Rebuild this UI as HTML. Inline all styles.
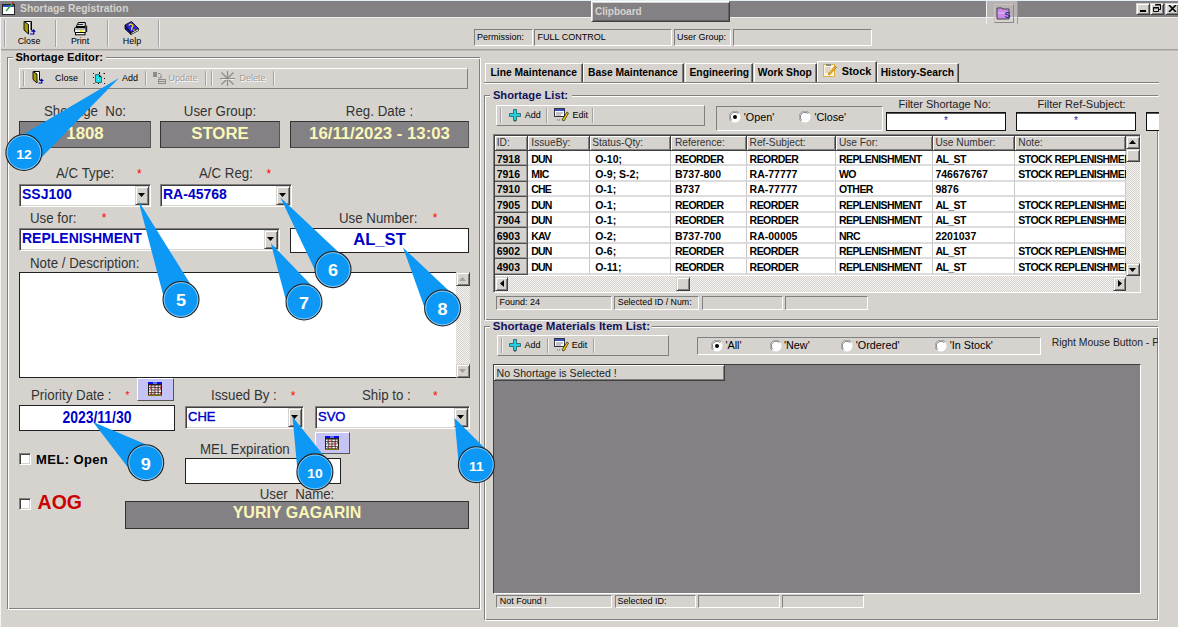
<!DOCTYPE html><html><head><meta charset="utf-8"><style>
html,body{margin:0;padding:0;}
body{width:1178px;height:627px;overflow:hidden;position:relative;background:#D6D3CE;font-family:"Liberation Sans",sans-serif;}
div,svg{position:absolute;box-sizing:border-box;}
</style></head><body>
<div style="left:0px;top:0px;width:1178px;height:1px;background:#E6EEF6;"></div>
<div style="left:0px;top:1px;width:1178px;height:16px;background:#848184;"></div>
<div style="left:0px;top:17px;width:1178px;height:1px;background:#EFEEEC;"></div>
<div style="left:0px;top:17px;width:1px;height:610px;background:#F4F4F4;"></div>
<svg style="left:2px;top:2px" width="14" height="13"><rect x="0.5" y="2.5" width="12" height="10" fill="#fff" stroke="#222"/><rect x="1" y="3" width="11" height="2" fill="#2A4EC8"/><path d="M4 9L11 1" stroke="#3a3" stroke-width="1.5"/><rect x="10" y="0" width="2" height="2" fill="#d22"/></svg>
<div style="left:20px;top:4.20px;white-space:nowrap;font-size:10.4px;line-height:10.4px;font-weight:bold;color:#D6D3CE;text-align:left;white-space:nowrap;">Shortage Registration</div>
<div style="left:591px;top:1px;width:139px;height:21px;background:#848184;border-top:1px solid #fff;border-left:1px solid #fff;border-bottom:1px solid #404040;border-right:1px solid #404040;box-shadow:inset 1px 1px 0 #D6D3CE, inset -1px -1px 0 #606060;"></div>
<div style="left:595px;top:6.54px;white-space:nowrap;font-size:10px;line-height:10px;font-weight:bold;color:#D6D3CE;text-align:left;white-space:nowrap;">Clipboard</div>
<div style="left:986px;top:1px;width:32px;height:16px;background:#B9B2B2;"></div>
<div style="left:986px;top:1px;width:1px;height:23px;background:#F2F2F2;"></div>
<div style="left:1017px;top:1px;width:1px;height:23px;background:#9A9898;"></div>
<div style="left:994px;top:4px;width:20px;height:19px;border-top:1px solid #c8c4c4;border-left:1px solid #c8c4c4;border-bottom:1px solid #8a8888;border-right:1px solid #8a8888;"></div>
<svg style="left:996px;top:6px" width="15" height="14"><path d="M1 2h5l1 1h6v10H1z" fill="#C88AE8" stroke="#444"/><path d="M2 7h11" stroke="#e6c6f4"/><text x="8.5" y="11.5" font-family="Liberation Sans" font-weight="bold" font-size="9" fill="#2a2a90">S</text></svg>
<div style="left:1136px;top:3px;width:14px;height:12px;background:#D6D3CE;border-top:1px solid #D6D3CE;border-left:1px solid #D6D3CE;border-bottom:1px solid #404040;border-right:1px solid #404040;box-sizing:border-box;box-shadow:inset 1px 1px 0 #fff, inset -1px -1px 0 #808080;"></div>
<div style="left:1150px;top:3px;width:14px;height:12px;background:#D6D3CE;border-top:1px solid #D6D3CE;border-left:1px solid #D6D3CE;border-bottom:1px solid #404040;border-right:1px solid #404040;box-sizing:border-box;box-shadow:inset 1px 1px 0 #fff, inset -1px -1px 0 #808080;"></div>
<div style="left:1165px;top:3px;width:14px;height:12px;background:#D6D3CE;border-top:1px solid #D6D3CE;border-left:1px solid #D6D3CE;border-bottom:1px solid #404040;border-right:1px solid #404040;box-sizing:border-box;box-shadow:inset 1px 1px 0 #fff, inset -1px -1px 0 #808080;"></div>
<svg style="left:1140px;top:10px" width="6" height="2"><rect width="6" height="2" fill="#000"/></svg>
<svg style="left:1153px;top:4px" width="8" height="8"><path d="M2.5 0.5h5v5h-2M0.5 3.5h5v4h-5z" fill="none" stroke="#000"/><path d="M2 1h6M0 4h6" stroke="#000"/></svg>
<svg style="left:1168px;top:5px" width="9" height="7"><path d="M1 0L8 7M8 0L1 7" stroke="#000" stroke-width="1.6"/></svg>
<div style="left:4px;top:20px;width:1px;height:27px;background:#A4A2A6;"></div>
<div style="left:5px;top:20px;width:1px;height:27px;background:#F0EFED;"></div>
<div style="left:55px;top:20px;width:1px;height:27px;background:#A4A2A6;"></div>
<div style="left:56px;top:20px;width:1px;height:27px;background:#F0EFED;"></div>
<div style="left:107px;top:20px;width:1px;height:27px;background:#A4A2A6;"></div>
<div style="left:108px;top:20px;width:1px;height:27px;background:#F0EFED;"></div>
<div style="left:158px;top:20px;width:1px;height:27px;background:#A4A2A6;"></div>
<div style="left:159px;top:20px;width:1px;height:27px;background:#F0EFED;"></div>
<div style="left:1px;top:49px;width:1177px;height:1px;background:#A2A0A0;"></div>
<div style="left:1px;top:50px;width:1177px;height:1px;background:#BEBCB9;"></div>
<svg style="left:18px;top:18px" width="20" height="20"><path d="M6.5 3.5h7v9" fill="none" stroke="#000"/><rect x="8" y="4" width="4.5" height="8" fill="#fff"/><path d="M12.5 4v8" stroke="#808080"/><path d="M6 3.5L10.5 6.5V16L6 12z" fill="#A39B00" stroke="#000" stroke-width="0.9"/><path d="M15.5 11L18 13.7H16.4V16.6H12V15.6H15.2V13.7H13z" fill="#0000A8"/></svg>
<svg style="left:70px;top:18px" width="20" height="20"><path d="M8.3 4.5h7v4h-9z" fill="#D8D8D8" stroke="#000"/><path d="M8 6.5h5" stroke="#000" stroke-width="0.8"/><rect x="4.5" y="9.5" width="11.5" height="5" rx="1" fill="#EEE" stroke="#000"/><path d="M5 11h10.5" stroke="#555" stroke-width="0.8"/><rect x="10" y="12" width="2.5" height="2" fill="#F0F000"/><rect x="5.5" y="14.5" width="9.5" height="2.3" fill="#fff" stroke="#000"/><path d="M16.5 7.5v6.5" stroke="#222" stroke-width="1.4"/></svg>
<svg style="left:120px;top:18px" width="20" height="20"><path d="M5 7L11.5 3.5L18.5 10.5L11 15z" fill="#2A2AE0" stroke="#000" stroke-width="0.8"/><path d="M5 7V11L11 16.5V15z" fill="#1818A0" stroke="#000" stroke-width="0.8"/><path d="M11 15L18.5 10.5V12.5L11 16.5z" fill="#fff" stroke="#000" stroke-width="0.7"/><path d="M9 7.5q1-2 3-1t0 3q-1 1 0 2.5" fill="none" stroke="#FFE000" stroke-width="1.3"/><circle cx="14" cy="12" r="0.8" fill="#FFE000"/></svg>
<div style="left:6px;top:37.07px;white-space:nowrap;font-size:8.9px;line-height:8.9px;font-weight:normal;color:#000;text-align:left;white-space:nowrap;width:46px;text-align:center;">Close</div>
<div style="left:57px;top:37.07px;white-space:nowrap;font-size:8.9px;line-height:8.9px;font-weight:normal;color:#000;text-align:left;white-space:nowrap;width:46px;text-align:center;">Print</div>
<div style="left:109px;top:37.07px;white-space:nowrap;font-size:8.9px;line-height:8.9px;font-weight:normal;color:#000;text-align:left;white-space:nowrap;width:46px;text-align:center;">Help</div>
<div style="left:474px;top:29px;width:59px;height:17px;background:#D6D3CE;border-top:1px solid #808080;border-left:1px solid #808080;border-bottom:1px solid #fff;border-right:1px solid #fff;box-sizing:border-box;"></div>
<div style="left:477px;top:33.38px;white-space:nowrap;font-size:9px;line-height:9px;font-weight:normal;color:#000;text-align:left;white-space:nowrap;">Permission:</div>
<div style="left:534px;top:29px;width:138px;height:17px;background:#D6D3CE;border-top:1px solid #808080;border-left:1px solid #808080;border-bottom:1px solid #fff;border-right:1px solid #fff;box-sizing:border-box;"></div>
<div style="left:537.5px;top:33.38px;white-space:nowrap;font-size:9px;line-height:9px;font-weight:normal;color:#000;text-align:left;white-space:nowrap;">FULL CONTROL</div>
<div style="left:674px;top:29px;width:57px;height:17px;background:#D6D3CE;border-top:1px solid #808080;border-left:1px solid #808080;border-bottom:1px solid #fff;border-right:1px solid #fff;box-sizing:border-box;"></div>
<div style="left:677px;top:33.38px;white-space:nowrap;font-size:9px;line-height:9px;font-weight:normal;color:#000;text-align:left;white-space:nowrap;">User Group:</div>
<div style="left:733px;top:29px;width:139px;height:17px;background:#D6D3CE;border-top:1px solid #808080;border-left:1px solid #808080;border-bottom:1px solid #fff;border-right:1px solid #fff;box-sizing:border-box;"></div>
<div style="left:7px;top:57px;width:473px;height:552px;border:1px solid #808080;box-sizing:border-box;"></div>
<div style="left:8px;top:58px;width:473px;height:552px;border:1px solid #fff;box-sizing:border-box;"></div>
<div style="left:13px;top:52px;width:93px;height:12px;background:#D6D3CE;"></div>
<div style="left:15.4px;top:52.22px;white-space:nowrap;font-size:11.2px;line-height:11.2px;font-weight:bold;color:#000;text-align:left;white-space:nowrap;">Shortage Editor:</div>
<div style="left:19px;top:68px;width:449px;height:21px;background:#D6D3CE;border-top:1px solid #fff;border-left:1px solid #fff;border-bottom:1px solid #808080;border-right:1px solid #808080;box-sizing:border-box;"></div>
<div style="left:23px;top:71px;width:1px;height:15px;background:#A4A2A6;"></div>
<div style="left:24px;top:71px;width:1px;height:15px;background:#F0EFED;"></div>
<div style="left:84px;top:71px;width:1px;height:15px;background:#A4A2A6;"></div>
<div style="left:85px;top:71px;width:1px;height:15px;background:#F0EFED;"></div>
<div style="left:145px;top:71px;width:1px;height:15px;background:#A4A2A6;"></div>
<div style="left:146px;top:71px;width:1px;height:15px;background:#F0EFED;"></div>
<div style="left:205px;top:71px;width:1px;height:15px;background:#A4A2A6;"></div>
<div style="left:206px;top:71px;width:1px;height:15px;background:#F0EFED;"></div>
<div style="left:211px;top:71px;width:1px;height:15px;background:#A4A2A6;"></div>
<div style="left:212px;top:71px;width:1px;height:15px;background:#F0EFED;"></div>
<div style="left:273px;top:71px;width:1px;height:15px;background:#A4A2A6;"></div>
<div style="left:274px;top:71px;width:1px;height:15px;background:#F0EFED;"></div>
<svg style="left:27px;top:68px" width="20" height="20"><path d="M6.5 3.5h6v8.5" fill="none" stroke="#000"/><rect x="8" y="4" width="4" height="7.5" fill="#fff"/><path d="M6 3.5L10 6V15L6 11.5z" fill="#A39B00" stroke="#000" stroke-width="0.9"/><path d="M14.5 10.5L17 13H15.4V15.6H11.5V14.6H14.2V13H12z" fill="#0000A8"/></svg>
<div style="left:55px;top:74.08px;white-space:nowrap;font-size:9px;line-height:9px;font-weight:normal;color:#000;text-align:left;white-space:nowrap;">Close</div>
<svg style="left:88px;top:68px" width="20" height="20"><path d="M7.5 6.5h3.5l2.5 2.5v5.5h-6z" fill="#10E0E8" stroke="#444" stroke-width="0.8"/><path d="M11 6.5v2.5h2.5z" fill="#000"/><path d="M9 9l1 1M10 11l1 1" stroke="#bff" stroke-width="0.8"/><g fill="#111"><rect x="5" y="5" width="1" height="1"/><rect x="11" y="4" width="1" height="2"/><rect x="15.5" y="5" width="1.5" height="1"/><rect x="5" y="9" width="1" height="1"/><rect x="16" y="10" width="1" height="1"/><rect x="5.5" y="15" width="1" height="1"/><rect x="10" y="15" width="1" height="1"/><rect x="16" y="15" width="1" height="1"/></g></svg>
<div style="left:122px;top:74.08px;white-space:nowrap;font-size:9px;line-height:9px;font-weight:normal;color:#000;text-align:left;white-space:nowrap;">Add</div>
<svg style="left:0;top:0" width="240" height="90"><g fill="none" stroke="#8C8C8C"><rect x="153.5" y="72.5" width="3" height="4" fill="#8C8C8C"/><path d="M158 73.5h2l1 1v4"/><path d="M161 77l-1.5 1.5L158 77"/><rect x="158.5" y="79.5" width="7" height="4"/><path d="M159 81.5h6"/></g></svg>
<div style="left:168.5px;top:74.08px;white-space:nowrap;font-size:9px;line-height:9px;font-weight:normal;color:#A09C98;text-align:left;white-space:nowrap;text-shadow:1px 1px 0 #fff;">Update</div>
<svg style="left:0;top:0" width="240" height="90"><g stroke="#8C8C8C" stroke-width="1.2"><path d="M227.5 71v15M220 78.5h15M221.5 72.5l12 12M233.5 72.5l-12 12"/></g><path d="M222 79.5h12" stroke="#fff" stroke-width="0.6"/></svg>
<div style="left:239.5px;top:74.08px;white-space:nowrap;font-size:9px;line-height:9px;font-weight:normal;color:#A09C98;text-align:left;white-space:nowrap;text-shadow:1px 1px 0 #fff;">Delete</div>
<div style="left:19px;top:103.85px;white-space:nowrap;font-size:14px;line-height:14px;font-weight:normal;color:#333;text-align:left;white-space:nowrap;transform:scaleX(0.95);width:132px;text-align:center;">Shortage&nbsp; No:</div>
<div style="left:160px;top:103.85px;white-space:nowrap;font-size:14px;line-height:14px;font-weight:normal;color:#333;text-align:left;white-space:nowrap;transform:scaleX(0.95);width:120px;text-align:center;">User Group:</div>
<div style="left:290px;top:103.85px;white-space:nowrap;font-size:14px;line-height:14px;font-weight:normal;color:#333;text-align:left;white-space:nowrap;transform:scaleX(0.95);width:179px;text-align:center;">Reg. Date :</div>
<div style="left:19px;top:121px;width:132px;height:27px;background:#848184;border:1px solid #333;border-right-color:#555;border-bottom-color:#444;"></div>
<div style="left:19px;top:125.78px;white-space:nowrap;font-size:16.8px;line-height:16.8px;font-weight:bold;color:#FBF7B8;text-align:left;white-space:nowrap;width:132px;text-align:center;">1808</div>
<div style="left:160px;top:121px;width:120px;height:27px;background:#848184;border:1px solid #333;border-right-color:#555;border-bottom-color:#444;"></div>
<div style="left:160px;top:125.78px;white-space:nowrap;font-size:16.8px;line-height:16.8px;font-weight:bold;color:#FBF7B8;text-align:left;white-space:nowrap;width:120px;text-align:center;">STORE</div>
<div style="left:290px;top:121px;width:179px;height:27px;background:#848184;border:1px solid #333;border-right-color:#555;border-bottom-color:#444;"></div>
<div style="left:290px;top:125.78px;white-space:nowrap;font-size:16.8px;line-height:16.8px;font-weight:bold;color:#FBF7B8;text-align:left;white-space:nowrap;width:179px;text-align:center;">16/11/2023 - 13:03</div>
<div style="left:55.5px;top:166.45px;white-space:nowrap;font-size:14px;line-height:14px;font-weight:normal;color:#333;text-align:left;white-space:nowrap;transform:scaleX(0.95);transform-origin:0 0;">A/C Type:</div>
<div style="left:137px;top:168.14px;white-space:nowrap;font-size:12px;line-height:12px;font-weight:normal;color:#f00;text-align:left;white-space:nowrap;">*</div>
<div style="left:199px;top:166.45px;white-space:nowrap;font-size:14px;line-height:14px;font-weight:normal;color:#333;text-align:left;white-space:nowrap;transform:scaleX(0.95);transform-origin:0 0;">A/C Reg:</div>
<div style="left:266.5px;top:168.14px;white-space:nowrap;font-size:12px;line-height:12px;font-weight:normal;color:#f00;text-align:left;white-space:nowrap;">*</div>
<div style="left:19px;top:184px;width:132px;height:23px;background:#fff;border-top:1px solid #808080;border-left:1px solid #808080;border-bottom:1px solid #fff;border-right:1px solid #fff;box-sizing:border-box;box-shadow:inset 1px 1px 0 #404040, inset -1px -1px 0 #D6D3CE;"></div>
<div style="left:135px;top:186px;width:14px;height:19px;background:#D6D3CE;border-top:1px solid #D6D3CE;border-left:1px solid #D6D3CE;border-bottom:1px solid #404040;border-right:1px solid #404040;box-sizing:border-box;box-shadow:inset 1px 1px 0 #fff, inset -1px -1px 0 #808080;"></div>
<svg style="left:138px;top:193px" width="7" height="4"><path d="M0 0h7L3.5 4z" fill="#000"/></svg>
<div style="left:22px;top:187.19px;white-space:nowrap;font-size:14px;line-height:14px;font-weight:bold;color:#0000C8;text-align:left;white-space:nowrap;">SSJ100</div>
<div style="left:160px;top:184px;width:132px;height:23px;background:#fff;border-top:1px solid #808080;border-left:1px solid #808080;border-bottom:1px solid #fff;border-right:1px solid #fff;box-sizing:border-box;box-shadow:inset 1px 1px 0 #404040, inset -1px -1px 0 #D6D3CE;"></div>
<div style="left:276px;top:186px;width:14px;height:19px;background:#D6D3CE;border-top:1px solid #D6D3CE;border-left:1px solid #D6D3CE;border-bottom:1px solid #404040;border-right:1px solid #404040;box-sizing:border-box;box-shadow:inset 1px 1px 0 #fff, inset -1px -1px 0 #808080;"></div>
<svg style="left:279px;top:193px" width="7" height="4"><path d="M0 0h7L3.5 4z" fill="#000"/></svg>
<div style="left:163px;top:187.19px;white-space:nowrap;font-size:14px;line-height:14px;font-weight:bold;color:#0000C8;text-align:left;white-space:nowrap;">RA-45768</div>
<div style="left:30.4px;top:210.65px;white-space:nowrap;font-size:14px;line-height:14px;font-weight:normal;color:#333;text-align:left;white-space:nowrap;transform:scaleX(0.95);transform-origin:0 0;">Use for:</div>
<div style="left:101.7px;top:212.34px;white-space:nowrap;font-size:12px;line-height:12px;font-weight:normal;color:#f00;text-align:left;white-space:nowrap;">*</div>
<div style="left:339.4px;top:210.65px;white-space:nowrap;font-size:14px;line-height:14px;font-weight:normal;color:#333;text-align:left;white-space:nowrap;transform:scaleX(0.95);transform-origin:0 0;">Use Number:</div>
<div style="left:432.8px;top:212.34px;white-space:nowrap;font-size:12px;line-height:12px;font-weight:normal;color:#f00;text-align:left;white-space:nowrap;">*</div>
<div style="left:19px;top:228px;width:261px;height:23px;background:#fff;border-top:1px solid #808080;border-left:1px solid #808080;border-bottom:1px solid #fff;border-right:1px solid #fff;box-sizing:border-box;box-shadow:inset 1px 1px 0 #404040, inset -1px -1px 0 #D6D3CE;"></div>
<div style="left:264px;top:230px;width:14px;height:19px;background:#D6D3CE;border-top:1px solid #D6D3CE;border-left:1px solid #D6D3CE;border-bottom:1px solid #404040;border-right:1px solid #404040;box-sizing:border-box;box-shadow:inset 1px 1px 0 #fff, inset -1px -1px 0 #808080;"></div>
<svg style="left:267px;top:237px" width="7" height="4"><path d="M0 0h7L3.5 4z" fill="#000"/></svg>
<div style="left:22px;top:231.19px;white-space:nowrap;font-size:14px;line-height:14px;font-weight:bold;color:#0000C8;text-align:left;white-space:nowrap;">REPLENISHMENT</div>
<div style="left:290px;top:228px;width:179px;height:25px;background:#fff;border:1px solid #222;"></div>
<div style="left:290px;top:231.95px;white-space:nowrap;font-size:16.6px;line-height:16.6px;font-weight:bold;color:#0000C8;text-align:left;white-space:nowrap;width:179px;text-align:center;">AL_ST</div>
<div style="left:30.4px;top:255.65px;white-space:nowrap;font-size:14px;line-height:14px;font-weight:normal;color:#333;text-align:left;white-space:nowrap;transform:scaleX(0.95);transform-origin:0 0;">Note / Description:</div>
<div style="left:19px;top:272px;width:438px;height:106px;background:#fff;border:1px solid #222;"></div>
<div style="left:456px;top:272px;width:14px;height:106px;background:conic-gradient(#F4F3F1 25%,#D6D3CE 0 50%,#F4F3F1 0 75%,#D6D3CE 0) 0 0/2px 2px;"></div>
<div style="left:456px;top:272px;width:14px;height:14px;background:#D6D3CE;border-top:1px solid #D6D3CE;border-left:1px solid #D6D3CE;border-bottom:1px solid #404040;border-right:1px solid #404040;box-sizing:border-box;box-shadow:inset 1px 1px 0 #fff, inset -1px -1px 0 #808080;"></div>
<div style="left:456px;top:364px;width:14px;height:14px;background:#D6D3CE;border-top:1px solid #D6D3CE;border-left:1px solid #D6D3CE;border-bottom:1px solid #404040;border-right:1px solid #404040;box-sizing:border-box;box-shadow:inset 1px 1px 0 #fff, inset -1px -1px 0 #808080;"></div>
<svg style="left:459px;top:277px" width="7" height="4"><path d="M0 4h7L3.5 0z" fill="#A0A0A0"/></svg>
<svg style="left:459px;top:369px" width="7" height="4"><path d="M0 0h7L3.5 4z" fill="#A0A0A0"/></svg>
<div style="left:31.4px;top:387.95px;white-space:nowrap;font-size:14px;line-height:14px;font-weight:normal;color:#333;text-align:left;white-space:nowrap;transform:scaleX(0.95);transform-origin:0 0;">Priority Date :</div>
<div style="left:125.4px;top:391.34px;white-space:nowrap;font-size:10px;line-height:10px;font-weight:normal;color:#f00;text-align:left;white-space:nowrap;">*</div>
<div style="left:137px;top:378px;width:37px;height:23px;background:#C6C4F4;border-top:1px solid #fff;border-left:1px solid #fff;border-bottom:1px solid #555;border-right:1px solid #555;"></div>
<svg style="left:148.0px;top:381.5px" width="14" height="14"><rect x="0" y="0" width="14" height="14" fill="#222"/><rect x="0" y="0" width="14" height="2" fill="#0010F0"/><rect x="5" y="0.5" width="4" height="1" fill="#ccd"/><rect x="1.0" y="3.5" width="2.4" height="1.7" fill="#fff"/><rect x="1.0" y="5.9" width="2.4" height="1.7" fill="#fff"/><rect x="1.0" y="8.3" width="2.4" height="1.7" fill="#fff"/><rect x="1.0" y="10.7" width="2.4" height="1.7" fill="#fff"/><rect x="4.2" y="3.5" width="2.4" height="1.7" fill="#fff"/><rect x="4.2" y="5.9" width="2.4" height="1.7" fill="#fff"/><rect x="4.2" y="8.3" width="2.4" height="1.7" fill="#fff"/><rect x="4.2" y="10.7" width="2.4" height="1.7" fill="#fff"/><rect x="7.4" y="3.5" width="2.4" height="1.7" fill="#fff"/><rect x="7.4" y="5.9" width="2.4" height="1.7" fill="#fff"/><rect x="7.4" y="8.3" width="2.4" height="1.7" fill="#fff"/><rect x="7.4" y="10.7" width="2.4" height="1.7" fill="#fff"/><rect x="10.6" y="3.5" width="2.4" height="1.7" fill="#fff"/><rect x="10.6" y="5.9" width="2.4" height="1.7" fill="#fff"/><rect x="10.6" y="8.3" width="2.4" height="1.7" fill="#fff"/><rect x="10.6" y="10.7" width="2.4" height="1.7" fill="#fff"/><rect x="2.2" y="3.5" width="1.2" height="1.2" fill="#F02020"/><rect x="2.2" y="5.9" width="1.2" height="1.2" fill="#F02020"/><rect x="2.2" y="10.7" width="1.2" height="1.2" fill="#F02020"/><rect x="5.4" y="3.5" width="1.2" height="1.2" fill="#F02020"/><rect x="5.4" y="8.3" width="1.2" height="1.2" fill="#F02020"/><rect x="5.4" y="10.7" width="1.2" height="1.2" fill="#F02020"/><rect x="8.6" y="5.9" width="1.2" height="1.2" fill="#F02020"/><rect x="8.6" y="8.3" width="1.2" height="1.2" fill="#F02020"/><rect x="11.8" y="3.5" width="1.2" height="1.2" fill="#F02020"/><rect x="11.8" y="5.9" width="1.2" height="1.2" fill="#F02020"/><rect x="11.8" y="10.7" width="1.2" height="1.2" fill="#F02020"/><rect x="0" y="12.8" width="14" height="1.2" fill="#807000"/></svg>
<div style="left:211.3px;top:387.95px;white-space:nowrap;font-size:14px;line-height:14px;font-weight:normal;color:#333;text-align:left;white-space:nowrap;transform:scaleX(0.95);transform-origin:0 0;">Issued By :</div>
<div style="left:290.8px;top:389.64px;white-space:nowrap;font-size:12px;line-height:12px;font-weight:normal;color:#f00;text-align:left;white-space:nowrap;">*</div>
<div style="left:362px;top:387.95px;white-space:nowrap;font-size:14px;line-height:14px;font-weight:normal;color:#333;text-align:left;white-space:nowrap;transform:scaleX(0.95);transform-origin:0 0;">Ship to :</div>
<div style="left:433px;top:389.64px;white-space:nowrap;font-size:12px;line-height:12px;font-weight:normal;color:#f00;text-align:left;white-space:nowrap;">*</div>
<div style="left:19px;top:405px;width:156px;height:26px;background:#fff;border:1px solid #222;"></div>
<div style="left:19px;top:409.96px;white-space:nowrap;font-size:16px;line-height:16px;font-weight:bold;color:#0000C8;text-align:left;white-space:nowrap;width:156px;text-align:center;transform:scaleX(0.87);">2023/11/30</div>
<div style="left:185px;top:406px;width:119px;height:23px;background:#fff;border-top:1px solid #808080;border-left:1px solid #808080;border-bottom:1px solid #fff;border-right:1px solid #fff;box-sizing:border-box;box-shadow:inset 1px 1px 0 #404040, inset -1px -1px 0 #D6D3CE;"></div>
<div style="left:288px;top:408px;width:14px;height:19px;background:#D6D3CE;border-top:1px solid #D6D3CE;border-left:1px solid #D6D3CE;border-bottom:1px solid #404040;border-right:1px solid #404040;box-sizing:border-box;box-shadow:inset 1px 1px 0 #fff, inset -1px -1px 0 #808080;"></div>
<svg style="left:291px;top:415px" width="7" height="4"><path d="M0 0h7L3.5 4z" fill="#000"/></svg>
<div style="left:188px;top:409.68px;white-space:nowrap;font-size:13px;line-height:13px;font-weight:normal;color:#0000C8;text-align:left;white-space:nowrap;-webkit-text-stroke:0.4px #0000C8;">CHE</div>
<style>.med{-webkit-text-stroke:0.35px #0000C8;}</style>
<div style="left:315px;top:406px;width:155px;height:23px;background:#fff;border-top:1px solid #808080;border-left:1px solid #808080;border-bottom:1px solid #fff;border-right:1px solid #fff;box-sizing:border-box;box-shadow:inset 1px 1px 0 #404040, inset -1px -1px 0 #D6D3CE;"></div>
<div style="left:454px;top:408px;width:14px;height:19px;background:#D6D3CE;border-top:1px solid #D6D3CE;border-left:1px solid #D6D3CE;border-bottom:1px solid #404040;border-right:1px solid #404040;box-sizing:border-box;box-shadow:inset 1px 1px 0 #fff, inset -1px -1px 0 #808080;"></div>
<svg style="left:457px;top:415px" width="7" height="4"><path d="M0 0h7L3.5 4z" fill="#000"/></svg>
<div style="left:318px;top:409.68px;white-space:nowrap;font-size:13px;line-height:13px;font-weight:normal;color:#0000C8;text-align:left;white-space:nowrap;-webkit-text-stroke:0.4px #0000C8;">SVO</div>
<div style="left:315px;top:432px;width:35px;height:22px;background:#C6C4F4;border-top:1px solid #fff;border-left:1px solid #fff;border-bottom:1px solid #555;border-right:1px solid #555;"></div>
<svg style="left:325.0px;top:435.5px" width="14" height="14"><rect x="0" y="0" width="14" height="14" fill="#222"/><rect x="0" y="0" width="14" height="2" fill="#0010F0"/><rect x="5" y="0.5" width="4" height="1" fill="#ccd"/><rect x="1.0" y="3.5" width="2.4" height="1.7" fill="#fff"/><rect x="1.0" y="5.9" width="2.4" height="1.7" fill="#fff"/><rect x="1.0" y="8.3" width="2.4" height="1.7" fill="#fff"/><rect x="1.0" y="10.7" width="2.4" height="1.7" fill="#fff"/><rect x="4.2" y="3.5" width="2.4" height="1.7" fill="#fff"/><rect x="4.2" y="5.9" width="2.4" height="1.7" fill="#fff"/><rect x="4.2" y="8.3" width="2.4" height="1.7" fill="#fff"/><rect x="4.2" y="10.7" width="2.4" height="1.7" fill="#fff"/><rect x="7.4" y="3.5" width="2.4" height="1.7" fill="#fff"/><rect x="7.4" y="5.9" width="2.4" height="1.7" fill="#fff"/><rect x="7.4" y="8.3" width="2.4" height="1.7" fill="#fff"/><rect x="7.4" y="10.7" width="2.4" height="1.7" fill="#fff"/><rect x="10.6" y="3.5" width="2.4" height="1.7" fill="#fff"/><rect x="10.6" y="5.9" width="2.4" height="1.7" fill="#fff"/><rect x="10.6" y="8.3" width="2.4" height="1.7" fill="#fff"/><rect x="10.6" y="10.7" width="2.4" height="1.7" fill="#fff"/><rect x="2.2" y="3.5" width="1.2" height="1.2" fill="#F02020"/><rect x="2.2" y="5.9" width="1.2" height="1.2" fill="#F02020"/><rect x="2.2" y="10.7" width="1.2" height="1.2" fill="#F02020"/><rect x="5.4" y="3.5" width="1.2" height="1.2" fill="#F02020"/><rect x="5.4" y="8.3" width="1.2" height="1.2" fill="#F02020"/><rect x="5.4" y="10.7" width="1.2" height="1.2" fill="#F02020"/><rect x="8.6" y="5.9" width="1.2" height="1.2" fill="#F02020"/><rect x="8.6" y="8.3" width="1.2" height="1.2" fill="#F02020"/><rect x="11.8" y="3.5" width="1.2" height="1.2" fill="#F02020"/><rect x="11.8" y="5.9" width="1.2" height="1.2" fill="#F02020"/><rect x="11.8" y="10.7" width="1.2" height="1.2" fill="#F02020"/><rect x="0" y="12.8" width="14" height="1.2" fill="#807000"/></svg>
<div style="left:199.8px;top:441.65px;white-space:nowrap;font-size:14px;line-height:14px;font-weight:normal;color:#333;text-align:left;white-space:nowrap;transform:scaleX(0.95);transform-origin:0 0;">MEL Expiration</div>
<div style="left:185px;top:458px;width:156px;height:26px;background:#fff;border:1px solid #222;"></div>
<div style="left:19px;top:453px;width:12px;height:12px;background:#fff;border-top:1px solid #808080;border-left:1px solid #808080;border-bottom:1px solid #fff;border-right:1px solid #fff;box-shadow:inset 1px 1px 0 #404040, inset -1px -1px 0 #D6D3CE;"></div>
<div style="left:36px;top:452.50px;white-space:nowrap;font-size:13px;line-height:13px;font-weight:bold;color:#000;text-align:left;white-space:nowrap;letter-spacing:0.4px;">MEL: Open</div>
<div style="left:19px;top:498px;width:12px;height:12px;background:#fff;border-top:1px solid #808080;border-left:1px solid #808080;border-bottom:1px solid #fff;border-right:1px solid #fff;box-shadow:inset 1px 1px 0 #404040, inset -1px -1px 0 #D6D3CE;"></div>
<div style="left:37.6px;top:493.09px;white-space:nowrap;font-size:19.5px;line-height:19.5px;font-weight:bold;color:#CC0000;text-align:left;white-space:nowrap;">AOG</div>
<div style="left:125px;top:486.55px;white-space:nowrap;font-size:14px;line-height:14px;font-weight:normal;color:#333;text-align:left;white-space:nowrap;transform:scaleX(0.95);width:344px;text-align:center;">User&nbsp; Name:</div>
<div style="left:125px;top:501px;width:344px;height:28px;background:#848184;border:1px solid #333;"></div>
<div style="left:125px;top:505.46px;white-space:nowrap;font-size:16px;line-height:16px;font-weight:bold;color:#FBF7B8;text-align:left;white-space:nowrap;width:344px;text-align:center;">YURIY GAGARIN</div>
<div style="left:485px;top:63px;width:98px;height:20px;border-top:1px solid #fff;border-left:1px solid #fff;border-right:1px solid #404040;box-shadow:inset -1px 0 0 #808080;"></div>
<div style="left:490.5px;top:68.28px;white-space:nowrap;font-size:10.3px;line-height:10.3px;font-weight:bold;color:#000;text-align:left;white-space:nowrap;">Line Maintenance</div>
<div style="left:583px;top:63px;width:101px;height:20px;border-top:1px solid #fff;border-left:1px solid #fff;border-right:1px solid #404040;box-shadow:inset -1px 0 0 #808080;"></div>
<div style="left:588px;top:68.28px;white-space:nowrap;font-size:10.3px;line-height:10.3px;font-weight:bold;color:#000;text-align:left;white-space:nowrap;">Base Maintenance</div>
<div style="left:685px;top:63px;width:68px;height:20px;border-top:1px solid #fff;border-left:1px solid #fff;border-right:1px solid #404040;box-shadow:inset -1px 0 0 #808080;"></div>
<div style="left:689.5px;top:68.28px;white-space:nowrap;font-size:10.3px;line-height:10.3px;font-weight:bold;color:#000;text-align:left;white-space:nowrap;">Engineering</div>
<div style="left:754px;top:63px;width:63px;height:20px;border-top:1px solid #fff;border-left:1px solid #fff;border-right:1px solid #404040;box-shadow:inset -1px 0 0 #808080;"></div>
<div style="left:757.7px;top:68.28px;white-space:nowrap;font-size:10.3px;line-height:10.3px;font-weight:bold;color:#000;text-align:left;white-space:nowrap;">Work Shop</div>
<div style="left:877px;top:63px;width:82px;height:20px;border-top:1px solid #fff;border-left:1px solid #fff;border-right:1px solid #404040;box-shadow:inset -1px 0 0 #808080;"></div>
<div style="left:880.7px;top:68.28px;white-space:nowrap;font-size:10.3px;line-height:10.3px;font-weight:bold;color:#000;text-align:left;white-space:nowrap;">History-Search</div>
<div style="left:817px;top:61px;width:60px;height:22px;border-top:1px solid #fff;border-left:1px solid #fff;border-right:1px solid #404040;box-shadow:inset -1px 0 0 #808080;"></div>
<svg style="left:823px;top:64px" width="14" height="13"><rect x="0.5" y="0.5" width="11" height="12" fill="#FFF6D8" stroke="#E0B040"/><rect x="3" y="0" width="5" height="2" fill="#888"/><path d="M2 4h6M2 6h5M2 8h4" stroke="#bbb"/><path d="M5 10L12 2l1.5 1.5L6.5 11z" fill="#F0B020" stroke="#a06000" stroke-width="0.6"/></svg>
<div style="left:841.8px;top:66.06px;white-space:nowrap;font-size:10.8px;line-height:10.8px;font-weight:bold;color:#000;text-align:left;white-space:nowrap;">Stock</div>
<div style="left:484px;top:82px;width:675px;height:1px;background:#808080;"></div>
<div style="left:484px;top:83px;width:675px;height:1px;background:#fff;"></div>
<div style="left:484px;top:95px;width:674px;height:225px;border:1px solid #808080;box-sizing:border-box;"></div>
<div style="left:485px;top:96px;width:674px;height:225px;border:1px solid #fff;box-sizing:border-box;"></div>
<div style="left:490px;top:88px;width:82px;height:12px;background:#D6D3CE;"></div>
<div style="left:492.9px;top:90.22px;white-space:nowrap;font-size:11.2px;line-height:11.2px;font-weight:bold;color:#12125C;text-align:left;white-space:nowrap;">Shortage List:</div>
<div style="left:496px;top:105px;width:209px;height:21px;background:#D6D3CE;border-top:1px solid #fff;border-left:1px solid #fff;border-bottom:1px solid #808080;border-right:1px solid #808080;box-sizing:border-box;"></div>
<div style="left:500px;top:108px;width:1px;height:15px;background:#A4A2A6;"></div>
<div style="left:501px;top:108px;width:1px;height:15px;background:#F0EFED;"></div>
<div style="left:546px;top:108px;width:1px;height:15px;background:#A4A2A6;"></div>
<div style="left:547px;top:108px;width:1px;height:15px;background:#F0EFED;"></div>
<div style="left:592px;top:108px;width:1px;height:15px;background:#A4A2A6;"></div>
<div style="left:593px;top:108px;width:1px;height:15px;background:#F0EFED;"></div>
<svg style="left:509px;top:109px" width="13" height="13"><path d="M4.5 0.5h3v4h4v3h-4v4h-3v-4h-4v-3h4z" fill="#20D0E0" stroke="#206060" stroke-width="0.8"/><path d="M5 12h2" stroke="#444"/></svg>
<div style="left:524.8px;top:110.88px;white-space:nowrap;font-size:9px;line-height:9px;font-weight:normal;color:#000;text-align:left;white-space:nowrap;">Add</div>
<svg style="left:554px;top:107px" width="15" height="15"><rect x="0.5" y="1.5" width="10" height="8" fill="#fff" stroke="#334"/><rect x="1" y="2" width="9" height="2" fill="#3050C0"/><path d="M2 6h7M2 8h5" stroke="#888"/><path d="M8 13L13 5l1.5 1L10 14z" fill="#F0D000" stroke="#000" stroke-width="0.6"/><path d="M3 13h3" stroke="#666" stroke-dasharray="1 1"/></svg>
<div style="left:572.4px;top:110.88px;white-space:nowrap;font-size:9px;line-height:9px;font-weight:normal;color:#000;text-align:left;white-space:nowrap;">Edit</div>
<div style="left:716px;top:106px;width:167px;height:25px;background:#D6D3CE;border-top:1px solid #808080;border-left:1px solid #808080;border-bottom:1px solid #fff;border-right:1px solid #fff;box-sizing:border-box;"></div>
<svg style="left:729px;top:111px" width="12" height="12"><circle cx="6" cy="6" r="5.5" fill="#fff"/><path d="M1.8 10A5.5 5.5 0 0 1 10 1.8" fill="none" stroke="#9a9a9a"/><path d="M2.7 9.3A4.5 4.5 0 0 1 9.3 2.7" fill="none" stroke="#606060" stroke-width="0.8"/><circle cx="6" cy="6" r="2" fill="#000"/></svg>
<div style="left:743.8px;top:111.86px;white-space:nowrap;font-size:10.8px;line-height:10.8px;font-weight:normal;color:#000;text-align:left;white-space:nowrap;">'Open'</div>
<svg style="left:799px;top:111px" width="12" height="12"><circle cx="6" cy="6" r="5.5" fill="#fff"/><path d="M1.8 10A5.5 5.5 0 0 1 10 1.8" fill="none" stroke="#9a9a9a"/><path d="M2.7 9.3A4.5 4.5 0 0 1 9.3 2.7" fill="none" stroke="#606060" stroke-width="0.8"/></svg>
<div style="left:814.4px;top:111.86px;white-space:nowrap;font-size:10.8px;line-height:10.8px;font-weight:normal;color:#000;text-align:left;white-space:nowrap;">'Close'</div>
<div style="left:898.5px;top:99.19px;white-space:nowrap;font-size:11px;line-height:11px;font-weight:normal;color:#222;text-align:left;white-space:nowrap;">Filter Shortage No:</div>
<div style="left:1037.6px;top:99.19px;white-space:nowrap;font-size:11px;line-height:11px;font-weight:normal;color:#222;text-align:left;white-space:nowrap;">Filter Ref-Subject:</div>
<div style="left:886px;top:112px;width:120px;height:19px;background:#fff;border:1px solid #111;box-shadow:inset 0 1px 0 #555;"></div>
<div style="left:1016px;top:112px;width:120px;height:19px;background:#fff;border:1px solid #111;box-shadow:inset 0 1px 0 #555;"></div>
<div style="left:1146px;top:112px;width:40px;height:19px;background:#fff;border:1px solid #111;box-shadow:inset 0 1px 0 #555;"></div>
<div style="left:886px;top:115.53px;white-space:nowrap;font-size:10px;line-height:10px;font-weight:normal;color:#1a1aa0;text-align:left;white-space:nowrap;width:120px;text-align:center;">*</div>
<div style="left:1016px;top:115.53px;white-space:nowrap;font-size:10px;line-height:10px;font-weight:normal;color:#1a1aa0;text-align:left;white-space:nowrap;width:120px;text-align:center;">*</div>
<div style="left:1156px;top:97px;width:3px;height:15px;background:#D6D3CE;"></div>
<div style="left:1159px;top:84px;width:19px;height:543px;background:#D6D3CE;"></div>
<div style="left:493px;top:134px;width:648px;height:159px;background:#fff;border-top:1px solid #808080;border-left:1px solid #808080;border-bottom:1px solid #fff;border-right:1px solid #fff;box-shadow:inset 1px 1px 0 #404040, inset -1px -1px 0 #D6D3CE;"></div>
<div style="left:495px;top:136px;width:631px;height:15px;background:#D6D3CE;"></div>
<div style="left:495px;top:136px;width:33px;height:15px;border-right:1px solid #404040;border-bottom:1px solid #404040;box-shadow:inset 1px 1px 0 #fff, inset -1px -1px 0 #808080;"></div>
<div style="left:496.7px;top:138.37px;white-space:nowrap;font-size:10.2px;line-height:10.2px;font-weight:normal;color:#333;text-align:left;white-space:nowrap;">ID:</div>
<div style="left:528px;top:136px;width:62px;height:15px;border-right:1px solid #404040;border-bottom:1px solid #404040;box-shadow:inset 1px 1px 0 #fff, inset -1px -1px 0 #808080;"></div>
<div style="left:531.3px;top:138.37px;white-space:nowrap;font-size:10.2px;line-height:10.2px;font-weight:normal;color:#333;text-align:left;white-space:nowrap;">IssueBy:</div>
<div style="left:590px;top:136px;width:81px;height:15px;border-right:1px solid #404040;border-bottom:1px solid #404040;box-shadow:inset 1px 1px 0 #fff, inset -1px -1px 0 #808080;"></div>
<div style="left:592.2px;top:138.37px;white-space:nowrap;font-size:10.2px;line-height:10.2px;font-weight:normal;color:#333;text-align:left;white-space:nowrap;">Status-Qty:</div>
<div style="left:671px;top:136px;width:76px;height:15px;border-right:1px solid #404040;border-bottom:1px solid #404040;box-shadow:inset 1px 1px 0 #fff, inset -1px -1px 0 #808080;"></div>
<div style="left:674.9px;top:138.37px;white-space:nowrap;font-size:10.2px;line-height:10.2px;font-weight:normal;color:#333;text-align:left;white-space:nowrap;">Reference:</div>
<div style="left:747px;top:136px;width:89px;height:15px;border-right:1px solid #404040;border-bottom:1px solid #404040;box-shadow:inset 1px 1px 0 #fff, inset -1px -1px 0 #808080;"></div>
<div style="left:749.6px;top:138.37px;white-space:nowrap;font-size:10.2px;line-height:10.2px;font-weight:normal;color:#333;text-align:left;white-space:nowrap;">Ref-Subject:</div>
<div style="left:836px;top:136px;width:97px;height:15px;border-right:1px solid #404040;border-bottom:1px solid #404040;box-shadow:inset 1px 1px 0 #fff, inset -1px -1px 0 #808080;"></div>
<div style="left:838.9px;top:138.37px;white-space:nowrap;font-size:10.2px;line-height:10.2px;font-weight:normal;color:#333;text-align:left;white-space:nowrap;">Use For:</div>
<div style="left:933px;top:136px;width:82px;height:15px;border-right:1px solid #404040;border-bottom:1px solid #404040;box-shadow:inset 1px 1px 0 #fff, inset -1px -1px 0 #808080;"></div>
<div style="left:935.4px;top:138.37px;white-space:nowrap;font-size:10.2px;line-height:10.2px;font-weight:normal;color:#333;text-align:left;white-space:nowrap;">Use Number:</div>
<div style="left:1015px;top:136px;width:111px;height:15px;border-right:1px solid #404040;border-bottom:1px solid #404040;box-shadow:inset 1px 1px 0 #fff, inset -1px -1px 0 #808080;"></div>
<div style="left:1018.3px;top:138.37px;white-space:nowrap;font-size:10.2px;line-height:10.2px;font-weight:normal;color:#333;text-align:left;white-space:nowrap;">Note:</div>
<div style="left:495px;top:151px;width:33px;height:15px;background:#D6D3CE;border-right:1px solid #505050;border-bottom:1px solid #505050;box-shadow:inset -1px -1px 0 #9a9a9a;"></div>
<div style="left:528px;top:151px;width:62px;height:15px;border-right:1px solid #C8C8C8;border-bottom:2px solid #DCDCDC;"></div>
<div style="left:590px;top:151px;width:81px;height:15px;border-right:1px solid #C8C8C8;border-bottom:2px solid #DCDCDC;"></div>
<div style="left:671px;top:151px;width:76px;height:15px;border-right:1px solid #C8C8C8;border-bottom:2px solid #DCDCDC;"></div>
<div style="left:747px;top:151px;width:89px;height:15px;border-right:1px solid #C8C8C8;border-bottom:2px solid #DCDCDC;"></div>
<div style="left:836px;top:151px;width:97px;height:15px;border-right:1px solid #C8C8C8;border-bottom:2px solid #DCDCDC;"></div>
<div style="left:933px;top:151px;width:82px;height:15px;border-right:1px solid #C8C8C8;border-bottom:2px solid #DCDCDC;"></div>
<div style="left:1015px;top:151px;width:111px;height:15px;border-right:1px solid #C8C8C8;border-bottom:2px solid #DCDCDC;"></div>
<div style="left:496.7px;top:153.50px;width:31.3px;overflow:hidden;font-size:10.5px;line-height:11px;font-weight:bold;color:#000;white-space:nowrap;">7918</div>
<div style="left:531.3px;top:153.50px;width:58.7px;overflow:hidden;font-size:10.5px;line-height:11px;font-weight:bold;color:#000;white-space:nowrap;letter-spacing:-0.9px;">DUN</div>
<div style="left:595.2px;top:153.50px;width:75.8px;overflow:hidden;font-size:10.5px;line-height:11px;font-weight:bold;color:#000;white-space:nowrap;">O-10;</div>
<div style="left:674.9px;top:153.50px;width:72.1px;overflow:hidden;font-size:10.5px;line-height:11px;font-weight:bold;color:#000;white-space:nowrap;letter-spacing:-0.55px;">REORDER</div>
<div style="left:749.6px;top:153.50px;width:86.4px;overflow:hidden;font-size:10.5px;line-height:11px;font-weight:bold;color:#000;white-space:nowrap;letter-spacing:-0.55px;">REORDER</div>
<div style="left:838.9px;top:153.50px;width:94.1px;overflow:hidden;font-size:10.5px;line-height:11px;font-weight:bold;color:#000;white-space:nowrap;letter-spacing:-0.55px;">REPLENISHMENT</div>
<div style="left:935.4px;top:153.50px;width:79.6px;overflow:hidden;font-size:10.5px;line-height:11px;font-weight:bold;color:#000;white-space:nowrap;letter-spacing:-0.55px;">AL_ST</div>
<div style="left:1018.3px;top:153.50px;width:107.7px;overflow:hidden;font-size:10.5px;line-height:11px;font-weight:bold;color:#000;white-space:nowrap;letter-spacing:-0.55px;">STOCK REPLENISHMENT</div>
<div style="left:495px;top:166px;width:33px;height:15.5px;background:#D6D3CE;border-right:1px solid #505050;border-bottom:1px solid #505050;box-shadow:inset -1px -1px 0 #9a9a9a;"></div>
<div style="left:528px;top:166px;width:62px;height:15.5px;border-right:1px solid #C8C8C8;border-bottom:2px solid #DCDCDC;"></div>
<div style="left:590px;top:166px;width:81px;height:15.5px;border-right:1px solid #C8C8C8;border-bottom:2px solid #DCDCDC;"></div>
<div style="left:671px;top:166px;width:76px;height:15.5px;border-right:1px solid #C8C8C8;border-bottom:2px solid #DCDCDC;"></div>
<div style="left:747px;top:166px;width:89px;height:15.5px;border-right:1px solid #C8C8C8;border-bottom:2px solid #DCDCDC;"></div>
<div style="left:836px;top:166px;width:97px;height:15.5px;border-right:1px solid #C8C8C8;border-bottom:2px solid #DCDCDC;"></div>
<div style="left:933px;top:166px;width:82px;height:15.5px;border-right:1px solid #C8C8C8;border-bottom:2px solid #DCDCDC;"></div>
<div style="left:1015px;top:166px;width:111px;height:15.5px;border-right:1px solid #C8C8C8;border-bottom:2px solid #DCDCDC;"></div>
<div style="left:496.7px;top:168.50px;width:31.3px;overflow:hidden;font-size:10.5px;line-height:11px;font-weight:bold;color:#000;white-space:nowrap;">7916</div>
<div style="left:531.3px;top:168.50px;width:58.7px;overflow:hidden;font-size:10.5px;line-height:11px;font-weight:bold;color:#000;white-space:nowrap;letter-spacing:-0.55px;">MIC</div>
<div style="left:595.2px;top:168.50px;width:75.8px;overflow:hidden;font-size:10.5px;line-height:11px;font-weight:bold;color:#000;white-space:nowrap;">O-9; S-2;</div>
<div style="left:674.9px;top:168.50px;width:72.1px;overflow:hidden;font-size:10.5px;line-height:11px;font-weight:bold;color:#000;white-space:nowrap;">B737-800</div>
<div style="left:749.6px;top:168.50px;width:86.4px;overflow:hidden;font-size:10.5px;line-height:11px;font-weight:bold;color:#000;white-space:nowrap;">RA-77777</div>
<div style="left:838.9px;top:168.50px;width:94.1px;overflow:hidden;font-size:10.5px;line-height:11px;font-weight:bold;color:#000;white-space:nowrap;letter-spacing:-0.55px;">WO</div>
<div style="left:935.4px;top:168.50px;width:79.6px;overflow:hidden;font-size:10.5px;line-height:11px;font-weight:bold;color:#000;white-space:nowrap;">746676767</div>
<div style="left:1018.3px;top:168.50px;width:107.7px;overflow:hidden;font-size:10.5px;line-height:11px;font-weight:bold;color:#000;white-space:nowrap;letter-spacing:-0.55px;">STOCK REPLENISHMENT</div>
<div style="left:495px;top:181.5px;width:33px;height:15.5px;background:#D6D3CE;border-right:1px solid #505050;border-bottom:1px solid #505050;box-shadow:inset -1px -1px 0 #9a9a9a;"></div>
<div style="left:528px;top:181.5px;width:62px;height:15.5px;border-right:1px solid #C8C8C8;border-bottom:2px solid #DCDCDC;"></div>
<div style="left:590px;top:181.5px;width:81px;height:15.5px;border-right:1px solid #C8C8C8;border-bottom:2px solid #DCDCDC;"></div>
<div style="left:671px;top:181.5px;width:76px;height:15.5px;border-right:1px solid #C8C8C8;border-bottom:2px solid #DCDCDC;"></div>
<div style="left:747px;top:181.5px;width:89px;height:15.5px;border-right:1px solid #C8C8C8;border-bottom:2px solid #DCDCDC;"></div>
<div style="left:836px;top:181.5px;width:97px;height:15.5px;border-right:1px solid #C8C8C8;border-bottom:2px solid #DCDCDC;"></div>
<div style="left:933px;top:181.5px;width:82px;height:15.5px;border-right:1px solid #C8C8C8;border-bottom:2px solid #DCDCDC;"></div>
<div style="left:1015px;top:181.5px;width:111px;height:15.5px;border-right:1px solid #C8C8C8;border-bottom:2px solid #DCDCDC;"></div>
<div style="left:496.7px;top:184.00px;width:31.3px;overflow:hidden;font-size:10.5px;line-height:11px;font-weight:bold;color:#000;white-space:nowrap;">7910</div>
<div style="left:531.3px;top:184.00px;width:58.7px;overflow:hidden;font-size:10.5px;line-height:11px;font-weight:bold;color:#000;white-space:nowrap;letter-spacing:-0.9px;">CHE</div>
<div style="left:595.2px;top:184.00px;width:75.8px;overflow:hidden;font-size:10.5px;line-height:11px;font-weight:bold;color:#000;white-space:nowrap;">O-1;</div>
<div style="left:674.9px;top:184.00px;width:72.1px;overflow:hidden;font-size:10.5px;line-height:11px;font-weight:bold;color:#000;white-space:nowrap;">B737</div>
<div style="left:749.6px;top:184.00px;width:86.4px;overflow:hidden;font-size:10.5px;line-height:11px;font-weight:bold;color:#000;white-space:nowrap;">RA-77777</div>
<div style="left:838.9px;top:184.00px;width:94.1px;overflow:hidden;font-size:10.5px;line-height:11px;font-weight:bold;color:#000;white-space:nowrap;letter-spacing:-0.55px;">OTHER</div>
<div style="left:935.4px;top:184.00px;width:79.6px;overflow:hidden;font-size:10.5px;line-height:11px;font-weight:bold;color:#000;white-space:nowrap;">9876</div>
<div style="left:495px;top:197px;width:33px;height:15.5px;background:#D6D3CE;border-right:1px solid #505050;border-bottom:1px solid #505050;box-shadow:inset -1px -1px 0 #9a9a9a;"></div>
<div style="left:528px;top:197px;width:62px;height:15.5px;border-right:1px solid #C8C8C8;border-bottom:2px solid #DCDCDC;"></div>
<div style="left:590px;top:197px;width:81px;height:15.5px;border-right:1px solid #C8C8C8;border-bottom:2px solid #DCDCDC;"></div>
<div style="left:671px;top:197px;width:76px;height:15.5px;border-right:1px solid #C8C8C8;border-bottom:2px solid #DCDCDC;"></div>
<div style="left:747px;top:197px;width:89px;height:15.5px;border-right:1px solid #C8C8C8;border-bottom:2px solid #DCDCDC;"></div>
<div style="left:836px;top:197px;width:97px;height:15.5px;border-right:1px solid #C8C8C8;border-bottom:2px solid #DCDCDC;"></div>
<div style="left:933px;top:197px;width:82px;height:15.5px;border-right:1px solid #C8C8C8;border-bottom:2px solid #DCDCDC;"></div>
<div style="left:1015px;top:197px;width:111px;height:15.5px;border-right:1px solid #C8C8C8;border-bottom:2px solid #DCDCDC;"></div>
<div style="left:496.7px;top:199.50px;width:31.3px;overflow:hidden;font-size:10.5px;line-height:11px;font-weight:bold;color:#000;white-space:nowrap;">7905</div>
<div style="left:531.3px;top:199.50px;width:58.7px;overflow:hidden;font-size:10.5px;line-height:11px;font-weight:bold;color:#000;white-space:nowrap;letter-spacing:-0.9px;">DUN</div>
<div style="left:595.2px;top:199.50px;width:75.8px;overflow:hidden;font-size:10.5px;line-height:11px;font-weight:bold;color:#000;white-space:nowrap;">O-1;</div>
<div style="left:674.9px;top:199.50px;width:72.1px;overflow:hidden;font-size:10.5px;line-height:11px;font-weight:bold;color:#000;white-space:nowrap;letter-spacing:-0.55px;">REORDER</div>
<div style="left:749.6px;top:199.50px;width:86.4px;overflow:hidden;font-size:10.5px;line-height:11px;font-weight:bold;color:#000;white-space:nowrap;letter-spacing:-0.55px;">REORDER</div>
<div style="left:838.9px;top:199.50px;width:94.1px;overflow:hidden;font-size:10.5px;line-height:11px;font-weight:bold;color:#000;white-space:nowrap;letter-spacing:-0.55px;">REPLENISHMENT</div>
<div style="left:935.4px;top:199.50px;width:79.6px;overflow:hidden;font-size:10.5px;line-height:11px;font-weight:bold;color:#000;white-space:nowrap;letter-spacing:-0.55px;">AL_ST</div>
<div style="left:1018.3px;top:199.50px;width:107.7px;overflow:hidden;font-size:10.5px;line-height:11px;font-weight:bold;color:#000;white-space:nowrap;letter-spacing:-0.55px;">STOCK REPLENISHMENT</div>
<div style="left:495px;top:212.5px;width:33px;height:15.5px;background:#D6D3CE;border-right:1px solid #505050;border-bottom:1px solid #505050;box-shadow:inset -1px -1px 0 #9a9a9a;"></div>
<div style="left:528px;top:212.5px;width:62px;height:15.5px;border-right:1px solid #C8C8C8;border-bottom:2px solid #DCDCDC;"></div>
<div style="left:590px;top:212.5px;width:81px;height:15.5px;border-right:1px solid #C8C8C8;border-bottom:2px solid #DCDCDC;"></div>
<div style="left:671px;top:212.5px;width:76px;height:15.5px;border-right:1px solid #C8C8C8;border-bottom:2px solid #DCDCDC;"></div>
<div style="left:747px;top:212.5px;width:89px;height:15.5px;border-right:1px solid #C8C8C8;border-bottom:2px solid #DCDCDC;"></div>
<div style="left:836px;top:212.5px;width:97px;height:15.5px;border-right:1px solid #C8C8C8;border-bottom:2px solid #DCDCDC;"></div>
<div style="left:933px;top:212.5px;width:82px;height:15.5px;border-right:1px solid #C8C8C8;border-bottom:2px solid #DCDCDC;"></div>
<div style="left:1015px;top:212.5px;width:111px;height:15.5px;border-right:1px solid #C8C8C8;border-bottom:2px solid #DCDCDC;"></div>
<div style="left:496.7px;top:215.00px;width:31.3px;overflow:hidden;font-size:10.5px;line-height:11px;font-weight:bold;color:#000;white-space:nowrap;">7904</div>
<div style="left:531.3px;top:215.00px;width:58.7px;overflow:hidden;font-size:10.5px;line-height:11px;font-weight:bold;color:#000;white-space:nowrap;letter-spacing:-0.9px;">DUN</div>
<div style="left:595.2px;top:215.00px;width:75.8px;overflow:hidden;font-size:10.5px;line-height:11px;font-weight:bold;color:#000;white-space:nowrap;">O-1;</div>
<div style="left:674.9px;top:215.00px;width:72.1px;overflow:hidden;font-size:10.5px;line-height:11px;font-weight:bold;color:#000;white-space:nowrap;letter-spacing:-0.55px;">REORDER</div>
<div style="left:749.6px;top:215.00px;width:86.4px;overflow:hidden;font-size:10.5px;line-height:11px;font-weight:bold;color:#000;white-space:nowrap;letter-spacing:-0.55px;">REORDER</div>
<div style="left:838.9px;top:215.00px;width:94.1px;overflow:hidden;font-size:10.5px;line-height:11px;font-weight:bold;color:#000;white-space:nowrap;letter-spacing:-0.55px;">REPLENISHMENT</div>
<div style="left:935.4px;top:215.00px;width:79.6px;overflow:hidden;font-size:10.5px;line-height:11px;font-weight:bold;color:#000;white-space:nowrap;letter-spacing:-0.55px;">AL_ST</div>
<div style="left:1018.3px;top:215.00px;width:107.7px;overflow:hidden;font-size:10.5px;line-height:11px;font-weight:bold;color:#000;white-space:nowrap;letter-spacing:-0.55px;">STOCK REPLENISHMENT</div>
<div style="left:495px;top:228px;width:33px;height:15.5px;background:#D6D3CE;border-right:1px solid #505050;border-bottom:1px solid #505050;box-shadow:inset -1px -1px 0 #9a9a9a;"></div>
<div style="left:528px;top:228px;width:62px;height:15.5px;border-right:1px solid #C8C8C8;border-bottom:2px solid #DCDCDC;"></div>
<div style="left:590px;top:228px;width:81px;height:15.5px;border-right:1px solid #C8C8C8;border-bottom:2px solid #DCDCDC;"></div>
<div style="left:671px;top:228px;width:76px;height:15.5px;border-right:1px solid #C8C8C8;border-bottom:2px solid #DCDCDC;"></div>
<div style="left:747px;top:228px;width:89px;height:15.5px;border-right:1px solid #C8C8C8;border-bottom:2px solid #DCDCDC;"></div>
<div style="left:836px;top:228px;width:97px;height:15.5px;border-right:1px solid #C8C8C8;border-bottom:2px solid #DCDCDC;"></div>
<div style="left:933px;top:228px;width:82px;height:15.5px;border-right:1px solid #C8C8C8;border-bottom:2px solid #DCDCDC;"></div>
<div style="left:1015px;top:228px;width:111px;height:15.5px;border-right:1px solid #C8C8C8;border-bottom:2px solid #DCDCDC;"></div>
<div style="left:496.7px;top:230.50px;width:31.3px;overflow:hidden;font-size:10.5px;line-height:11px;font-weight:bold;color:#000;white-space:nowrap;">6903</div>
<div style="left:531.3px;top:230.50px;width:58.7px;overflow:hidden;font-size:10.5px;line-height:11px;font-weight:bold;color:#000;white-space:nowrap;letter-spacing:-0.9px;">KAV</div>
<div style="left:595.2px;top:230.50px;width:75.8px;overflow:hidden;font-size:10.5px;line-height:11px;font-weight:bold;color:#000;white-space:nowrap;">O-2;</div>
<div style="left:674.9px;top:230.50px;width:72.1px;overflow:hidden;font-size:10.5px;line-height:11px;font-weight:bold;color:#000;white-space:nowrap;">B737-700</div>
<div style="left:749.6px;top:230.50px;width:86.4px;overflow:hidden;font-size:10.5px;line-height:11px;font-weight:bold;color:#000;white-space:nowrap;">RA-00005</div>
<div style="left:838.9px;top:230.50px;width:94.1px;overflow:hidden;font-size:10.5px;line-height:11px;font-weight:bold;color:#000;white-space:nowrap;letter-spacing:-0.55px;">NRC</div>
<div style="left:935.4px;top:230.50px;width:79.6px;overflow:hidden;font-size:10.5px;line-height:11px;font-weight:bold;color:#000;white-space:nowrap;">2201037</div>
<div style="left:495px;top:243.5px;width:33px;height:15.5px;background:#D6D3CE;border-right:1px solid #505050;border-bottom:1px solid #505050;box-shadow:inset -1px -1px 0 #9a9a9a;"></div>
<div style="left:528px;top:243.5px;width:62px;height:15.5px;border-right:1px solid #C8C8C8;border-bottom:2px solid #DCDCDC;"></div>
<div style="left:590px;top:243.5px;width:81px;height:15.5px;border-right:1px solid #C8C8C8;border-bottom:2px solid #DCDCDC;"></div>
<div style="left:671px;top:243.5px;width:76px;height:15.5px;border-right:1px solid #C8C8C8;border-bottom:2px solid #DCDCDC;"></div>
<div style="left:747px;top:243.5px;width:89px;height:15.5px;border-right:1px solid #C8C8C8;border-bottom:2px solid #DCDCDC;"></div>
<div style="left:836px;top:243.5px;width:97px;height:15.5px;border-right:1px solid #C8C8C8;border-bottom:2px solid #DCDCDC;"></div>
<div style="left:933px;top:243.5px;width:82px;height:15.5px;border-right:1px solid #C8C8C8;border-bottom:2px solid #DCDCDC;"></div>
<div style="left:1015px;top:243.5px;width:111px;height:15.5px;border-right:1px solid #C8C8C8;border-bottom:2px solid #DCDCDC;"></div>
<div style="left:496.7px;top:246.00px;width:31.3px;overflow:hidden;font-size:10.5px;line-height:11px;font-weight:bold;color:#000;white-space:nowrap;">6902</div>
<div style="left:531.3px;top:246.00px;width:58.7px;overflow:hidden;font-size:10.5px;line-height:11px;font-weight:bold;color:#000;white-space:nowrap;letter-spacing:-0.9px;">DUN</div>
<div style="left:595.2px;top:246.00px;width:75.8px;overflow:hidden;font-size:10.5px;line-height:11px;font-weight:bold;color:#000;white-space:nowrap;">O-6;</div>
<div style="left:674.9px;top:246.00px;width:72.1px;overflow:hidden;font-size:10.5px;line-height:11px;font-weight:bold;color:#000;white-space:nowrap;letter-spacing:-0.55px;">REORDER</div>
<div style="left:749.6px;top:246.00px;width:86.4px;overflow:hidden;font-size:10.5px;line-height:11px;font-weight:bold;color:#000;white-space:nowrap;letter-spacing:-0.55px;">REORDER</div>
<div style="left:838.9px;top:246.00px;width:94.1px;overflow:hidden;font-size:10.5px;line-height:11px;font-weight:bold;color:#000;white-space:nowrap;letter-spacing:-0.55px;">REPLENISHMENT</div>
<div style="left:935.4px;top:246.00px;width:79.6px;overflow:hidden;font-size:10.5px;line-height:11px;font-weight:bold;color:#000;white-space:nowrap;letter-spacing:-0.55px;">AL_ST</div>
<div style="left:1018.3px;top:246.00px;width:107.7px;overflow:hidden;font-size:10.5px;line-height:11px;font-weight:bold;color:#000;white-space:nowrap;letter-spacing:-0.55px;">STOCK REPLENISHMENT</div>
<div style="left:495px;top:259px;width:33px;height:16px;background:#D6D3CE;border-right:1px solid #505050;border-bottom:1px solid #505050;box-shadow:inset -1px -1px 0 #9a9a9a;"></div>
<div style="left:528px;top:259px;width:62px;height:16px;border-right:1px solid #C8C8C8;border-bottom:2px solid #DCDCDC;"></div>
<div style="left:590px;top:259px;width:81px;height:16px;border-right:1px solid #C8C8C8;border-bottom:2px solid #DCDCDC;"></div>
<div style="left:671px;top:259px;width:76px;height:16px;border-right:1px solid #C8C8C8;border-bottom:2px solid #DCDCDC;"></div>
<div style="left:747px;top:259px;width:89px;height:16px;border-right:1px solid #C8C8C8;border-bottom:2px solid #DCDCDC;"></div>
<div style="left:836px;top:259px;width:97px;height:16px;border-right:1px solid #C8C8C8;border-bottom:2px solid #DCDCDC;"></div>
<div style="left:933px;top:259px;width:82px;height:16px;border-right:1px solid #C8C8C8;border-bottom:2px solid #DCDCDC;"></div>
<div style="left:1015px;top:259px;width:111px;height:16px;border-right:1px solid #C8C8C8;border-bottom:2px solid #DCDCDC;"></div>
<div style="left:496.7px;top:261.50px;width:31.3px;overflow:hidden;font-size:10.5px;line-height:11px;font-weight:bold;color:#000;white-space:nowrap;">4903</div>
<div style="left:531.3px;top:261.50px;width:58.7px;overflow:hidden;font-size:10.5px;line-height:11px;font-weight:bold;color:#000;white-space:nowrap;letter-spacing:-0.9px;">DUN</div>
<div style="left:595.2px;top:261.50px;width:75.8px;overflow:hidden;font-size:10.5px;line-height:11px;font-weight:bold;color:#000;white-space:nowrap;">O-11;</div>
<div style="left:674.9px;top:261.50px;width:72.1px;overflow:hidden;font-size:10.5px;line-height:11px;font-weight:bold;color:#000;white-space:nowrap;letter-spacing:-0.55px;">REORDER</div>
<div style="left:749.6px;top:261.50px;width:86.4px;overflow:hidden;font-size:10.5px;line-height:11px;font-weight:bold;color:#000;white-space:nowrap;letter-spacing:-0.55px;">REORDER</div>
<div style="left:838.9px;top:261.50px;width:94.1px;overflow:hidden;font-size:10.5px;line-height:11px;font-weight:bold;color:#000;white-space:nowrap;letter-spacing:-0.55px;">REPLENISHMENT</div>
<div style="left:935.4px;top:261.50px;width:79.6px;overflow:hidden;font-size:10.5px;line-height:11px;font-weight:bold;color:#000;white-space:nowrap;letter-spacing:-0.55px;">AL_ST</div>
<div style="left:1018.3px;top:261.50px;width:107.7px;overflow:hidden;font-size:10.5px;line-height:11px;font-weight:bold;color:#000;white-space:nowrap;letter-spacing:-0.55px;">STOCK REPLENISHMENT</div>
<div style="left:1126px;top:136px;width:14px;height:140px;background:conic-gradient(#F4F3F1 25%,#D6D3CE 0 50%,#F4F3F1 0 75%,#D6D3CE 0) 0 0/2px 2px;"></div>
<div style="left:1126px;top:136px;width:14px;height:13px;background:#D6D3CE;border-top:1px solid #D6D3CE;border-left:1px solid #D6D3CE;border-bottom:1px solid #404040;border-right:1px solid #404040;box-sizing:border-box;box-shadow:inset 1px 1px 0 #fff, inset -1px -1px 0 #808080;"></div>
<div style="left:1126px;top:149px;width:14px;height:13px;background:#D6D3CE;border-top:1px solid #D6D3CE;border-left:1px solid #D6D3CE;border-bottom:1px solid #404040;border-right:1px solid #404040;box-sizing:border-box;box-shadow:inset 1px 1px 0 #fff, inset -1px -1px 0 #808080;"></div>
<div style="left:1126px;top:263px;width:14px;height:13px;background:#D6D3CE;border-top:1px solid #D6D3CE;border-left:1px solid #D6D3CE;border-bottom:1px solid #404040;border-right:1px solid #404040;box-sizing:border-box;box-shadow:inset 1px 1px 0 #fff, inset -1px -1px 0 #808080;"></div>
<svg style="left:1129px;top:140px" width="7" height="4"><path d="M0 4h7L3.5 0z" fill="#000"/></svg>
<svg style="left:1129px;top:268px" width="7" height="4"><path d="M0 0h7L3.5 4z" fill="#000"/></svg>
<div style="left:495px;top:276px;width:631px;height:16px;background:conic-gradient(#F4F3F1 25%,#D6D3CE 0 50%,#F4F3F1 0 75%,#D6D3CE 0) 0 0/2px 2px;"></div>
<div style="left:1126px;top:276px;width:14px;height:15px;background:#D6D3CE;"></div>
<div style="left:495px;top:277px;width:13px;height:14px;background:#D6D3CE;border-top:1px solid #D6D3CE;border-left:1px solid #D6D3CE;border-bottom:1px solid #404040;border-right:1px solid #404040;box-sizing:border-box;box-shadow:inset 1px 1px 0 #fff, inset -1px -1px 0 #808080;"></div>
<div style="left:676px;top:277px;width:14px;height:14px;background:#D6D3CE;border-top:1px solid #D6D3CE;border-left:1px solid #D6D3CE;border-bottom:1px solid #404040;border-right:1px solid #404040;box-sizing:border-box;box-shadow:inset 1px 1px 0 #fff, inset -1px -1px 0 #808080;"></div>
<div style="left:1113px;top:277px;width:13px;height:14px;background:#D6D3CE;border-top:1px solid #D6D3CE;border-left:1px solid #D6D3CE;border-bottom:1px solid #404040;border-right:1px solid #404040;box-sizing:border-box;box-shadow:inset 1px 1px 0 #fff, inset -1px -1px 0 #808080;"></div>
<svg style="left:500px;top:280px" width="4" height="7"><path d="M4 0v7L0 3.5z" fill="#000"/></svg>
<svg style="left:1118px;top:280px" width="4" height="7"><path d="M0 0v7L4 3.5z" fill="#000"/></svg>
<div style="left:496px;top:296px;width:116px;height:14px;background:#D6D3CE;border-top:1px solid #808080;border-left:1px solid #808080;border-bottom:1px solid #fff;border-right:1px solid #fff;box-sizing:border-box;"></div>
<div style="left:614px;top:296px;width:85px;height:14px;background:#D6D3CE;border-top:1px solid #808080;border-left:1px solid #808080;border-bottom:1px solid #fff;border-right:1px solid #fff;box-sizing:border-box;"></div>
<div style="left:702px;top:296px;width:81px;height:14px;background:#D6D3CE;border-top:1px solid #808080;border-left:1px solid #808080;border-bottom:1px solid #fff;border-right:1px solid #fff;box-sizing:border-box;"></div>
<div style="left:785px;top:296px;width:83px;height:14px;background:#D6D3CE;border-top:1px solid #808080;border-left:1px solid #808080;border-bottom:1px solid #fff;border-right:1px solid #fff;box-sizing:border-box;"></div>
<div style="left:499.5px;top:297.88px;white-space:nowrap;font-size:9px;line-height:9px;font-weight:normal;color:#000;text-align:left;white-space:nowrap;">Found: 24</div>
<div style="left:617.8px;top:298.05px;white-space:nowrap;font-size:8.8px;line-height:8.8px;font-weight:normal;color:#000;text-align:left;white-space:nowrap;">Selected ID / Num:</div>
<div style="left:484px;top:326px;width:674px;height:294px;border:1px solid #808080;box-sizing:border-box;"></div>
<div style="left:485px;top:327px;width:674px;height:294px;border:1px solid #fff;box-sizing:border-box;"></div>
<div style="left:490px;top:321px;width:162px;height:10px;background:#D6D3CE;"></div>
<div style="left:492.8px;top:320.57px;white-space:nowrap;font-size:11.5px;line-height:11.5px;font-weight:bold;color:#12125C;text-align:left;white-space:nowrap;">Shortage Materials Item List:</div>
<div style="left:497px;top:335px;width:172px;height:21px;background:#D6D3CE;border-top:1px solid #fff;border-left:1px solid #fff;border-bottom:1px solid #808080;border-right:1px solid #808080;box-sizing:border-box;"></div>
<div style="left:501px;top:338px;width:1px;height:15px;background:#A4A2A6;"></div>
<div style="left:502px;top:338px;width:1px;height:15px;background:#F0EFED;"></div>
<div style="left:547px;top:338px;width:1px;height:15px;background:#A4A2A6;"></div>
<div style="left:548px;top:338px;width:1px;height:15px;background:#F0EFED;"></div>
<div style="left:593px;top:338px;width:1px;height:15px;background:#A4A2A6;"></div>
<div style="left:594px;top:338px;width:1px;height:15px;background:#F0EFED;"></div>
<svg style="left:509px;top:339px" width="13" height="13"><path d="M4.5 0.5h3v4h4v3h-4v4h-3v-4h-4v-3h4z" fill="#20D0E0" stroke="#206060" stroke-width="0.8"/><path d="M5 12h2" stroke="#444"/></svg>
<div style="left:524.6px;top:340.88px;white-space:nowrap;font-size:9px;line-height:9px;font-weight:normal;color:#000;text-align:left;white-space:nowrap;">Add</div>
<svg style="left:554px;top:337px" width="15" height="15"><rect x="0.5" y="1.5" width="10" height="8" fill="#fff" stroke="#334"/><rect x="1" y="2" width="9" height="2" fill="#3050C0"/><path d="M2 6h7M2 8h5" stroke="#888"/><path d="M8 13L13 5l1.5 1L10 14z" fill="#F0D000" stroke="#000" stroke-width="0.6"/><path d="M3 13h3" stroke="#666" stroke-dasharray="1 1"/></svg>
<div style="left:571.8px;top:340.88px;white-space:nowrap;font-size:9px;line-height:9px;font-weight:normal;color:#000;text-align:left;white-space:nowrap;">Edit</div>
<div style="left:697px;top:337px;width:344px;height:18px;background:#D6D3CE;border-top:1px solid #808080;border-left:1px solid #808080;border-bottom:1px solid #fff;border-right:1px solid #fff;box-sizing:border-box;"></div>
<svg style="left:711px;top:339.5px" width="12" height="12"><circle cx="6" cy="6" r="5.5" fill="#fff"/><path d="M1.8 10A5.5 5.5 0 0 1 10 1.8" fill="none" stroke="#9a9a9a"/><path d="M2.7 9.3A4.5 4.5 0 0 1 9.3 2.7" fill="none" stroke="#606060" stroke-width="0.8"/><circle cx="6" cy="6" r="2" fill="#000"/></svg>
<div style="left:725.4px;top:340.36px;white-space:nowrap;font-size:10.8px;line-height:10.8px;font-weight:normal;color:#000;text-align:left;white-space:nowrap;">'All'</div>
<svg style="left:770px;top:339.5px" width="12" height="12"><circle cx="6" cy="6" r="5.5" fill="#fff"/><path d="M1.8 10A5.5 5.5 0 0 1 10 1.8" fill="none" stroke="#9a9a9a"/><path d="M2.7 9.3A4.5 4.5 0 0 1 9.3 2.7" fill="none" stroke="#606060" stroke-width="0.8"/></svg>
<div style="left:784px;top:340.36px;white-space:nowrap;font-size:10.8px;line-height:10.8px;font-weight:normal;color:#000;text-align:left;white-space:nowrap;">'New'</div>
<svg style="left:841px;top:339.5px" width="12" height="12"><circle cx="6" cy="6" r="5.5" fill="#fff"/><path d="M1.8 10A5.5 5.5 0 0 1 10 1.8" fill="none" stroke="#9a9a9a"/><path d="M2.7 9.3A4.5 4.5 0 0 1 9.3 2.7" fill="none" stroke="#606060" stroke-width="0.8"/></svg>
<div style="left:855.8px;top:340.36px;white-space:nowrap;font-size:10.8px;line-height:10.8px;font-weight:normal;color:#000;text-align:left;white-space:nowrap;">'Ordered'</div>
<svg style="left:935px;top:339.5px" width="12" height="12"><circle cx="6" cy="6" r="5.5" fill="#fff"/><path d="M1.8 10A5.5 5.5 0 0 1 10 1.8" fill="none" stroke="#9a9a9a"/><path d="M2.7 9.3A4.5 4.5 0 0 1 9.3 2.7" fill="none" stroke="#606060" stroke-width="0.8"/></svg>
<div style="left:949.8px;top:340.36px;white-space:nowrap;font-size:10.8px;line-height:10.8px;font-weight:normal;color:#000;text-align:left;white-space:nowrap;">'In Stock'</div>
<div style="left:1051.7px;top:337.90px;white-space:nowrap;font-size:10.4px;line-height:10.4px;font-weight:normal;color:#222;text-align:left;white-space:nowrap;width:106px;overflow:hidden;">Right Mouse Button - P</div>
<div style="left:1159px;top:320px;width:19px;height:307px;background:#D6D3CE;"></div>
<div style="left:493px;top:364px;width:648px;height:230px;background:#848184;border-top:1px solid #404040;border-left:1px solid #404040;border-bottom:1px solid #fff;border-right:1px solid #fff;"></div>
<div style="left:494px;top:365px;width:231px;height:16px;background:#D6D3CE;border-right:1px solid #404040;border-bottom:1px solid #404040;box-shadow:inset 1px 1px 0 #fff, inset -1px -1px 0 #808080;"></div>
<div style="left:496.6px;top:368.03px;white-space:nowrap;font-size:10.6px;line-height:10.6px;font-weight:normal;color:#222;text-align:left;white-space:nowrap;">No Shortage is Selected !</div>
<div style="left:496px;top:595px;width:116px;height:13px;background:#D6D3CE;border-top:1px solid #808080;border-left:1px solid #808080;border-bottom:1px solid #fff;border-right:1px solid #fff;box-sizing:border-box;"></div>
<div style="left:615px;top:595px;width:81px;height:13px;background:#D6D3CE;border-top:1px solid #808080;border-left:1px solid #808080;border-bottom:1px solid #fff;border-right:1px solid #fff;box-sizing:border-box;"></div>
<div style="left:698px;top:595px;width:82px;height:13px;background:#D6D3CE;border-top:1px solid #808080;border-left:1px solid #808080;border-bottom:1px solid #fff;border-right:1px solid #fff;box-sizing:border-box;"></div>
<div style="left:782px;top:595px;width:82px;height:13px;background:#D6D3CE;border-top:1px solid #808080;border-left:1px solid #808080;border-bottom:1px solid #fff;border-right:1px solid #fff;box-sizing:border-box;"></div>
<div style="left:499.7px;top:596.88px;white-space:nowrap;font-size:9px;line-height:9px;font-weight:normal;color:#000;text-align:left;white-space:nowrap;">Not Found !</div>
<div style="left:617.5px;top:596.88px;white-space:nowrap;font-size:9px;line-height:9px;font-weight:normal;color:#000;text-align:left;white-space:nowrap;">Selected ID:</div>
<svg style="left:0;top:0" width="1178" height="627"><path d="M119 78L23.9 134.0L23.9 152.5L41.9 157.0z" fill="#0C98F4"/><circle cx="23.9" cy="152.5" r="17.9" fill="#0C98F4" stroke="#262626" stroke-width="1.3"/><circle cx="23.9" cy="152.5" r="16.9" fill="none" stroke="#bfe4fc" stroke-width="0.7"/><text transform="translate(23.9 158.9) scale(1.13 1)" text-anchor="middle" font-family="Liberation Sans" font-weight="bold" font-size="12.3" fill="#fff">12</text><path d="M138.4 200.8L163.1 294.8L181 299.5L189.9 283.3z" fill="#0C98F4"/><circle cx="181" cy="299.5" r="17.9" fill="#0C98F4" stroke="#262626" stroke-width="1.3"/><circle cx="181" cy="299.5" r="16.9" fill="none" stroke="#bfe4fc" stroke-width="0.7"/><text transform="translate(181 306.3) scale(1.13 1)" text-anchor="middle" font-family="Liberation Sans" font-weight="bold" font-size="16" fill="#fff">5</text><path d="M280.4 197.4L314.5 269.0L333 269.6L338.1 251.8z" fill="#0C98F4"/><circle cx="333" cy="269.6" r="17.9" fill="#0C98F4" stroke="#262626" stroke-width="1.3"/><circle cx="333" cy="269.6" r="16.9" fill="none" stroke="#bfe4fc" stroke-width="0.7"/><text transform="translate(333 276.40000000000003) scale(1.13 1)" text-anchor="middle" font-family="Liberation Sans" font-weight="bold" font-size="16" fill="#fff">6</text><path d="M270.8 243.3L285.7 299.3L304 302L311.1 284.9z" fill="#0C98F4"/><circle cx="304" cy="302" r="17.9" fill="#0C98F4" stroke="#262626" stroke-width="1.3"/><circle cx="304" cy="302" r="16.9" fill="none" stroke="#bfe4fc" stroke-width="0.7"/><text transform="translate(304 308.8) scale(1.13 1)" text-anchor="middle" font-family="Liberation Sans" font-weight="bold" font-size="16" fill="#fff">7</text><path d="M403 247.5L424.2 306.5L442.6 308L448.6 290.5z" fill="#0C98F4"/><circle cx="442.6" cy="308" r="17.9" fill="#0C98F4" stroke="#262626" stroke-width="1.3"/><circle cx="442.6" cy="308" r="16.9" fill="none" stroke="#bfe4fc" stroke-width="0.7"/><text transform="translate(442.6 314.8) scale(1.13 1)" text-anchor="middle" font-family="Liberation Sans" font-weight="bold" font-size="16" fill="#fff">8</text><path d="M93.1 421.9L127.8 467.2L145.7 462.7L145.6 444.2z" fill="#0C98F4"/><circle cx="145.7" cy="462.7" r="17.9" fill="#0C98F4" stroke="#262626" stroke-width="1.3"/><circle cx="145.7" cy="462.7" r="16.9" fill="none" stroke="#bfe4fc" stroke-width="0.7"/><text transform="translate(145.7 469.5) scale(1.13 1)" text-anchor="middle" font-family="Liberation Sans" font-weight="bold" font-size="16" fill="#fff">9</text><path d="M292.5 416.8L297.1 466.8L314.9 471.9L324.1 455.9z" fill="#0C98F4"/><circle cx="314.9" cy="471.9" r="17.9" fill="#0C98F4" stroke="#262626" stroke-width="1.3"/><circle cx="314.9" cy="471.9" r="16.9" fill="none" stroke="#bfe4fc" stroke-width="0.7"/><text transform="translate(314.9 478.29999999999995) scale(1.13 1)" text-anchor="middle" font-family="Liberation Sans" font-weight="bold" font-size="12.3" fill="#fff">10</text><path d="M454.5 418L458.4 460.6L476.4 464.7L484.8 448.2z" fill="#0C98F4"/><circle cx="476.4" cy="464.7" r="17.9" fill="#0C98F4" stroke="#262626" stroke-width="1.3"/><circle cx="476.4" cy="464.7" r="16.9" fill="none" stroke="#bfe4fc" stroke-width="0.7"/><text transform="translate(476.4 471.09999999999997) scale(1.13 1)" text-anchor="middle" font-family="Liberation Sans" font-weight="bold" font-size="12.3" fill="#fff">11</text></svg>
</body></html>
